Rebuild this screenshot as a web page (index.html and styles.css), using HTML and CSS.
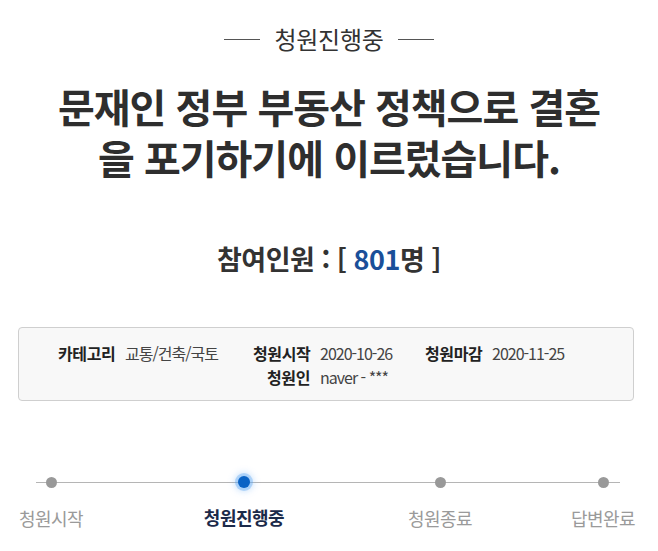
FILE: index.html
```html
<!DOCTYPE html>
<html lang="ko">
<head>
<meta charset="utf-8">
<link rel="stylesheet" href="styles.css">
</head>
<body>
<div class="page">
  <div class="status">
    <span class="status-line"></span>
    <span class="status-text">청원진행중</span>
    <span class="status-line"></span>
  </div>
  <h1 class="title">문재인 정부 부동산 정책으로 결혼<br>을 포기하기에 이르렀습니다.</h1>
  <div class="count">참여인원 : [ <span class="num">801</span>명 ]</div>
  <div class="info">
    <div class="info-grid">
      <div class="item"><span class="label">카테고리</span><span class="value">교통/건축/국토</span></div>
      <div class="item"><span class="label">청원시작</span><span class="value">2020-10-26</span></div>
      <div class="item"><span class="label">청원마감</span><span class="value">2020-11-25</span></div>
      <div class="item col2"><span class="label">청원인</span><span class="value">naver - ***</span></div>
    </div>
  </div>
  <div class="steps">
    <div class="step"><span class="dot"></span><span class="step-label">청원시작</span></div>
    <div class="step active"><span class="dot"></span><span class="step-label">청원진행중</span></div>
    <div class="step"><span class="dot"></span><span class="step-label">청원종료</span></div>
    <div class="step last"><span class="dot"></span><span class="step-label">답변완료</span></div>
  </div>
</div>
</body>
</html>
```
FILE: styles.css
```css
html, body {
  margin: 0;
  padding: 0;
  background: #ffffff;
}
body {
  width: 658px;
  height: 551px;
  overflow: hidden;
  font-family: "Noto Sans CJK KR", "Noto Sans", sans-serif;
  color: #333;
}
.page {
  padding-top: 23px;
}
.status {
  display: flex;
  justify-content: center;
  align-items: center;
  gap: 15px;
  height: 32px;
}
.status-line {
  width: 36px;
  height: 1px;
  background: #555;
}
.status-text {
  font-size: 24px;
  line-height: 32px;
  color: #333;
  letter-spacing: -0.3px;
}
.title {
  margin: 26px 0 0;
  font-size: 40px;
  line-height: 51px;
  font-weight: 700;
  text-align: center;
  color: #2e2e2e;
  letter-spacing: -1px;
}
.count {
  margin-top: 59px;
  font-size: 27px;
  line-height: 34px;
  font-weight: 700;
  text-align: center;
  color: #333;
  letter-spacing: -0.5px;
}
.count .num {
  color: #1a4f99;
}
.info {
  margin: 51px 24px 0 18px;
  border: 1px solid #cfcfcf;
  border-radius: 4px;
  background: #f8f8f8;
  padding: 13px 0 11px 39px;
  height: 48px;
}
.info-grid {
  display: grid;
  grid-template-columns: 195px 172px auto;
  grid-auto-rows: 24px;
}
.item {
  display: flex;
  align-items: center;
  font-size: 16px;
  line-height: 24px;
}
.item.col2 {
  grid-column: 2;
}
.label {
  display: inline-block;
  width: 57px;
  margin-right: 10px;
  text-align: right;
  font-weight: 700;
  color: #222;
  letter-spacing: -0.4px;
  white-space: nowrap;
}
.value {
  color: #444;
  letter-spacing: -1px;
  white-space: nowrap;
}
.steps {
  position: relative;
  margin-top: 76px;
  display: grid;
  grid-template-columns: 102px 284px 108px 1fr;
}
.steps::before {
  content: "";
  position: absolute;
  left: 36px;
  right: 38px;
  top: 5px;
  height: 1px;
  background: #b5b5b5;
}
.step {
  display: flex;
  flex-direction: column;
  align-items: center;
  position: relative;
}
.step.last {
  width: 110px;
  justify-self: end;
}
.dot {
  width: 11px;
  height: 11px;
  border-radius: 50%;
  background: #999;
}
.step.active .dot {
  width: 12px;
  height: 12px;
  margin-top: -1px;
  background: #0a63c5;
  box-shadow: 0 0 0 3px rgba(80, 160, 240, 0.35), 0 0 6px 4px rgba(120, 180, 245, 0.35);
}
.step-label {
  margin-top: 18px;
  font-size: 18px;
  line-height: 24px;
  color: #9a9a9a;
  letter-spacing: -0.5px;
}
.step.active .step-label {
  font-weight: 700;
  color: #1c2a4a;
}
.step.active .dot + .step-label {
  margin-top: 17px;
}
```
